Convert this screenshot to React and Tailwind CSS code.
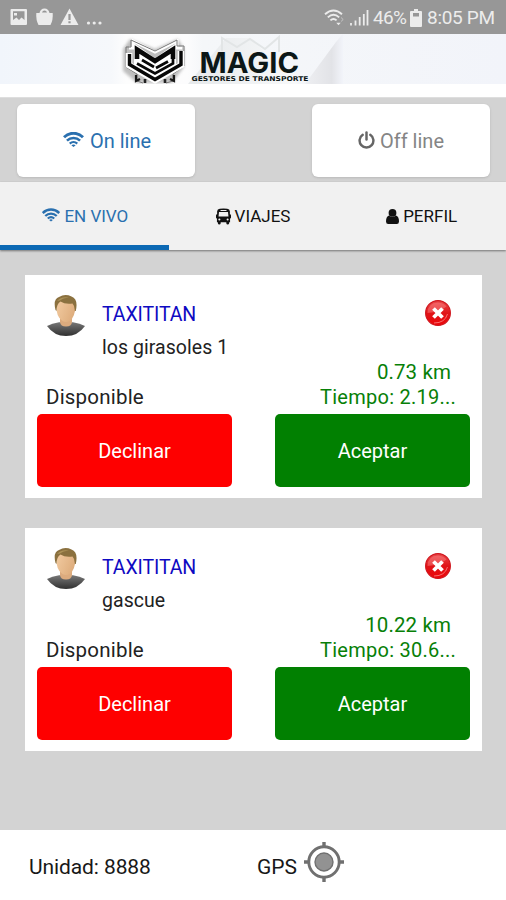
const WifiFan = ({ className }) => (
  <svg viewBox="0 0 22 16" className={className} fill="none" stroke="currentColor">
    <path d="M.9 5.6C6.6-.1 15.4-.1 21.1 5.6" strokeWidth="3.1" />
    <path d="M4 9.2C8 5.4 14 5.4 18 9.2" strokeWidth="2.8" />
    <path d="M7 12.3C9.3 10.3 12.7 10.3 15 12.3" strokeWidth="2.5" />
    <path d="M11 16 8.7 14Q11 12.6 13.3 14Z" fill="currentColor" stroke="none" />
  </svg>
);

const Power = ({ className }) => (
  <svg viewBox="0 0 18 19" className={className} fill="none" stroke="currentColor" strokeLinecap="round">
    <path d="M5 4A7.3 7.3 0 1 0 13 4" strokeWidth="2.6" />
    <path d="M9 1.5V9" strokeWidth="2.6" />
  </svg>
);

const Bus = ({ className }) => (
  <svg viewBox="0 0 16 17" className={className} fill="currentColor">
    <path
      fillRule="evenodd"
      d="M4 .3Q8-.5 12 .3 14.6.6 14.8 3V6Q16 6 16 7.5V9.5Q16 10.5 15 10.5V14.5H14V15.7Q13.8 17 12.5 17T11 15.7V14.5H5V15.7Q4.8 17 3.5 17T2 15.7V14.5H1V10.5Q0 10.5 0 9.5V7.5Q0 6 1.2 6V3Q1.4.6 4 .3ZM4.8 1.5V2.5H11.2V1.5ZM3.2 3.8 2.7 8.5H13.3L12.8 3.8ZM3.6 10.6A1.1 1.1 0 1 0 3.6 12.8 1.1 1.1 0 1 0 3.6 10.6ZM12.4 10.6A1.1 1.1 0 1 0 12.4 12.8 1.1 1.1 0 1 0 12.4 10.6Z"
    />
  </svg>
);

const Person = ({ className }) => (
  <svg viewBox="0 0 13 15" className={className} fill="currentColor">
    <circle cx="6.5" cy="3.9" r="3.9" />
    <path d="M3 6.5Q6.5 9.7 10 6.5 13 7.6 13 12.4 12.9 15 10.8 15H2.2Q.1 15 0 12.4 0 7.6 3 6.5Z" />
  </svg>
);

const StatusBar = () => (
  <div className="flex h-[34px] items-center justify-between bg-[#979797] pt-[1px] pr-[11px] pl-[10px] text-[#ececec]">
    <svg viewBox="0 0 92 20" className="h-5 w-[92px]" fill="#ececec">
      <path fillRule="evenodd" d="M1.5 1H16Q17 1 17 2V16Q17 17 16 17H1.5Q.5 17 .5 16V2Q.5 1 1.5 1ZM3 3.3V12L6.5 9.5 9 12 11.5 9.5 14.5 12V3.3ZM4 5H7V7.5H4Z" />
      <path fillRule="evenodd" d="M29.5 5Q30.5.5 34.5.5T39.5 5H42.7Q43.2 12 40.5 17H28.5Q25.8 12 26.3 5ZM32 4.5H37Q36.5 2.6 34.5 2.6T32 4.5Z" />
      <path fillRule="evenodd" d="M59.5.5 68.5 17H50.5ZM58.4 6V12H60.6V6ZM58.4 13.3V15.3H60.6V13.3Z" />
      <circle cx="78.5" cy="15" r="1.6" />
      <circle cx="84.2" cy="15" r="1.6" />
      <circle cx="90" cy="15" r="1.6" />
    </svg>
    <div className="flex items-center">
      <svg viewBox="0 0 46 20" className="h-5 w-[46px]" fill="none" stroke="#ececec">
        <path d="M1 6.2Q9.5-1.2 18 6.2M3.8 9.4Q9.5 4.2 15.2 9.4M6.4 12.4Q9.5 9.6 12.6 12.4" strokeWidth="1.9" />
        <path d="M12.3 14.8 14.5 17.2 16.7 14.8Z" fill="#ececec" stroke="none" />
        <path d="M17 9.5 19.2 11.5 17 13.5" strokeWidth="1" opacity=".5" />
        <path d="M27 15V17.5M31.5 12.5V17.5M35.7 9V17.5M39.8 6V17.5M43.5 2V17.5" strokeWidth="1.8" />
      </svg>
      <span className="ml-[3px] w-[34px] text-[19px] leading-5 tracking-[-0.7px]">46%</span>
      <svg viewBox="0 0 12 18" className="ml-[3px] h-[18px] w-3" fill="#ececec">
        <path fillRule="evenodd" d="M4 0H8V2H11Q12 2 12 3V17Q12 18 11 18H1Q0 18 0 17V3Q0 2 1 2H4ZM3 4V7.5H9V4Z" />
      </svg>
      <span className="ml-[5px] w-[68px] text-[19px] leading-5 tracking-[-0.3px] whitespace-nowrap">8:05 PM</span>
    </div>
  </div>
);

const Header = () => (
  <header className="h-[64px] border-b border-[#dedede] bg-white">
    <svg viewBox="0 0 506 50" className="h-[50px] w-[506px]">
      <defs>
        <linearGradient id="sky" x1="0" x2="1">
          <stop offset="0" stopColor="#f1f5fb" />
          <stop offset=".22" stopColor="#f6f8fb" />
          <stop offset=".25" stopColor="#fdfdfd" />
          <stop offset=".37" stopColor="#fcfcfd" />
          <stop offset=".4" stopColor="#f5f7f9" />
          <stop offset="1" stopColor="#f2f4fa" />
        </linearGradient>
        <linearGradient id="wedge" x1="0" x2="1">
          <stop offset="0" stopColor="#eeeff2" />
          <stop offset=".7" stopColor="#e2e3e7" />
          <stop offset="1" stopColor="#f2f4fa" />
        </linearGradient>
        <linearGradient id="haze" x1="0" x2="1">
          <stop offset="0" stopColor="#e6e9eb" />
          <stop offset="1" stopColor="#f8f9fa" />
        </linearGradient>
        <filter id="glow" x="-20%" y="-20%" width="140%" height="140%">
          <feGaussianBlur stdDeviation="1.6" />
        </filter>
      </defs>
      <rect width="506" height="50" fill="url(#sky)" />
      <path d="M188 50 226 4H250L298 50Z" fill="url(#haze)" />
      <path d="M305 50 336 8 343 0V50Z" fill="url(#wedge)" />
      <path d="M222 17V4L237 13 250 5 265 15 279 3V18" fill="none" stroke="#e2e5e6" strokeWidth="2" />
      <path d="M130 5 155 15 178 5 184 15V33L172 49H137L123 37V15Z" fill="#a4a4a4" opacity=".7" filter="url(#glow)" />
      <g fill="none">
        <path d="M129 14H133V7L155 18 177 7V14H182" stroke="#fff" strokeWidth="3" />
        <path d="M126 20V13H131V6L155 17 177 6V12H184V32L173 40V47L166 49M126 20V33L137 40V47L143 49" stroke="#777" strokeWidth="1" />
        <path d="M129 19V31L155 46 181 31V17" stroke="#fff" strokeWidth="6.5" />
        <path d="M137 30V15L155 28 173 15V30L155 40Z" fill="#fff" stroke="#fff" strokeWidth="6" />
        <path d="M137 25V15.5L155 27 173 15.5V25" stroke="#080808" strokeWidth="4.6" />
        <path d="M129.5 20V30.5L155 45.5 181 30.5V17" stroke="#080808" strokeWidth="3.4" />
        <path d="M142 26 154 33M137 29.5 155 39.5 173 29.5V23M156 34 168 27.5" stroke="#080808" strokeWidth="2.7" />
        <path d="M136 41V47L140 45M174 41V47L170 45" stroke="#181818" strokeWidth="2.2" />
        <path d="M145 45V49M165 45V49" stroke="#222" strokeWidth="2.6" />
      </g>
      <g fill="#0c1717">
        <text x="199.5" y="38.5" fontFamily="Inter, 'Liberation Sans', sans-serif" fontWeight="700" fontSize="28" textLength="99.5" lengthAdjust="spacingAndGlyphs">MAGIC</text>
        <text x="191.5" y="47.3" fontFamily="'DejaVu Sans', sans-serif" fontWeight="700" fontSize="6.6" textLength="117" lengthAdjust="spacingAndGlyphs">GESTORES DE TRANSPORTE</text>
      </g>
    </svg>
  </header>
);

const Avatar = () => (
  <svg viewBox="0 0 38 41" className="h-[41px] w-[38px]">
    <defs>
      <linearGradient id="skin" x1="0" x2="1" y2=".5">
        <stop offset="0" stopColor="#f3cda3" />
        <stop offset="1" stopColor="#dfae7e" />
      </linearGradient>
      <linearGradient id="shirt" x1="0" y1="0" x2="0" y2="1">
        <stop offset="0" stopColor="#777" />
        <stop offset="1" stopColor="#303030" />
      </linearGradient>
    </defs>
    <path d="M0 31Q5 28.5 12 27.3H26Q33 28.5 38 31 31 41 19 41T0 31Z" fill="url(#shirt)" />
    <path d="M13 22H25V27Q24.5 31.5 19 31.5T13 27Z" fill="#dcab7e" />
    <path d="M9 9Q10 3 19 3T28.3 10Q28.5 22 22.5 26 19 28 15.5 26 9 22 9 9Z" fill="url(#skin)" />
    <path d="M8.5 15Q5.8 4 12 2 18-1.5 24.5 1.5 31.5 4 28.8 16L27.8 16Q28 11 25.5 8.5 18 9.5 13.5 6.5 9.5 9 9.5 16Z" fill="#8b713f" />
    <path d="M10 6Q14 1 22 2.5 16 3 13 5.5Z" fill="#ab9158" />
  </svg>
);

const Reject = () => (
  <svg viewBox="0 0 26 26" className="h-[26px] w-[26px]">
    <defs>
      <linearGradient id="ball" x1="0" y1="0" x2="0" y2="1">
        <stop offset="0" stopColor="#ea4a4c" />
        <stop offset=".5" stopColor="#e01418" />
        <stop offset="1" stopColor="#ec060a" />
      </linearGradient>
    </defs>
    <circle cx="13" cy="13" r="12.4" fill="url(#ball)" stroke="#cf141c" strokeWidth="1.1" />
    <path d="M2.5 13Q2.5 3 13 2.5 19 3 21.5 6.5 15 12 2.5 13Z" fill="#f99" opacity=".4" />
    <path d="M9 23Q20 23 22.5 14" fill="none" stroke="#f99" opacity=".7" />
    <path d="M8.5 8.5 17.5 17.5M17.5 8.5 8.5 17.5" stroke="#fff" strokeWidth="3.8" />
  </svg>
);

const Card = ({ place, km, time }) => (
  <section className="h-[223px] w-[457px] bg-white px-3 pt-5">
    <div className="flex h-[66px] pr-[19px] pl-[10px]">
      <Avatar />
      <div className="ml-[17px] flex-1 pt-[7px] text-[19.5px] leading-[26px]">
        <div className="tracking-[-0.1px] text-[#0e0ac2]">TAXITITAN</div>
        <div className="mt-[7px] tracking-[0.05px] text-[#222]">{place}</div>
      </div>
      <div className="pt-[5px]"><Reject /></div>
    </div>
    <div className="-mt-px mb-px pr-[19px] text-right text-[20.5px] leading-[24px] tracking-[0.1px] text-[#078007]">{km}</div>
    <div className="flex justify-between pr-[14px] pl-[9px] text-[20px] leading-[24px]">
      <span className="text-[20.5px] tracking-[0.2px] text-[#222]">Disponible</span>
      <span className="tracking-[0.25px] text-[#078007]">{time}</span>
    </div>
    <div className="mt-[5px] flex justify-between text-[20px] text-white">
      <button className="h-[73px] w-[195px] rounded-[5px] bg-[#fe0000]">Declinar</button>
      <button className="h-[73px] w-[195px] rounded-[5px] bg-[#018001]">Aceptar</button>
    </div>
  </section>
);

export default function App() {
  return (
    <div className="flex h-[900px] w-[506px] flex-col overflow-hidden bg-[#d3d3d3] font-[Roboto,sans-serif]">
      <StatusBar />
      <Header />
      <div className="flex h-[84px] justify-between px-4 pt-[6px] text-[20px]">
        <button className="ml-[1px] flex h-[73px] w-[178px] items-center justify-center gap-[6px] rounded-[6px] bg-white pl-[2px] text-[#2a70af] shadow-sm">
          <WifiFan className="mb-[3px] h-[15px] w-[21px]" />
          <span>On line</span>
        </button>
        <button className="flex h-[73px] w-[178px] items-center justify-center gap-[5px] rounded-[6px] bg-white text-[#858585] shadow-sm">
          <Power className="mb-[2px] h-[18px] w-[17px] text-[#666]" />
          <span>Off line</span>
        </button>
      </div>
      <nav className="grid h-[68px] grid-cols-3 bg-[#f1f1f1] text-[17px] text-[#111] shadow-[0_1px_2px_rgba(0,0,0,.45)]">
        <div className="flex items-center justify-center gap-1 border-b-[5px] border-[#0c69b4] pt-[6px] pl-[2px] text-[#2a70af]">
          <WifiFan className="mb-[3px] h-[14px] w-[18px]" />
          <span>EN VIVO</span>
        </div>
        <div className="flex items-center justify-center gap-1 pt-px">
          <Bus className="h-[17px] w-[15px]" />
          <span>VIAJES</span>
        </div>
        <div className="flex items-center justify-center gap-1 pt-px">
          <Person className="h-[15px] w-[13px]" />
          <span>PERFIL</span>
        </div>
      </nav>
      <main className="flex h-[580px] flex-col gap-[30px] pt-[25px] pl-[25px]">
        <Card place="los girasoles 1" km="0.73 km" time="Tiempo: 2.19..." />
        <Card place="gascue" km="10.22 km" time="Tiempo: 30.6..." />
      </main>
      <footer className="flex h-[70px] items-center bg-white text-[21px] text-[#181818]">
        <span className="ml-[29px] w-[228px] pt-[5px] tracking-[-0.1px]">Unidad: 8888</span>
        <span className="w-[46px] pt-[5px]">GPS</span>
        <svg viewBox="0 0 42 42" className="mb-[6px] h-[42px] w-[42px]" fill="none" stroke="#707070">
          <circle cx="21" cy="21" r="15.2" strokeWidth="2.9" />
          <circle cx="21" cy="21" r="9" fill="#929292" strokeWidth="1.4" />
          <path d="M21 1V6M21 36V41M1 21H6M36 21H41" strokeWidth="3.4" />
        </svg>
      </footer>
    </div>
  );
}
